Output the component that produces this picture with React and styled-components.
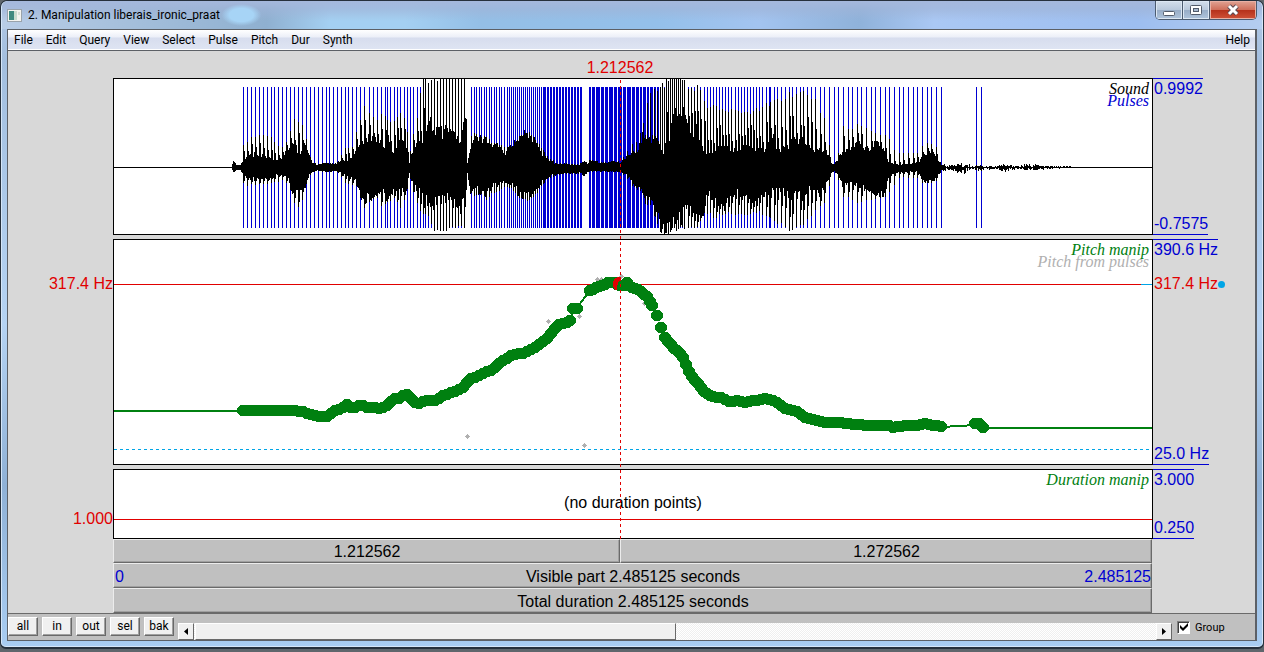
import React from "react";
import styled, { createGlobalStyle } from "styled-components";

const Global = createGlobalStyle`
  * { box-sizing: border-box; }
  html, body { margin: 0; background: #5f666c; }
  button, input { font: inherit; margin: 0; }
`;

const blue = "#0000d2";
const red = "#e10000";
const green = "#008010";
const cyan = "#00a5e6";
const grey = "#b0b0b0";

const Win = styled.main`
  display: flex;
  flex-direction: column;
  border: solid #26303c;
  border-width: 1px 1px 2px;
  border-radius: 7px 7px 6px 6px;
  padding: 0 6px 6px;
  background: linear-gradient(180deg, #b4c9e6 0, #a3bfdf 60px, #b5d3f3 50%, #8fb1d6 75%, #a9cdf2 100%);
  box-shadow: inset 0 0 0 1px #d5e6f8;
  font-family: Roboto, "Open Sans", sans-serif;
  font-size: 12px;
  color: #000;
`;

const TitleBar = styled.header`
  display: flex;
  align-items: flex-start;
  height: 28px;
  margin: 0 -5px;
  padding: 0 5px;
  border-radius: 6px 6px 0 0;
  background:
    radial-gradient(ellipse 20px 11px at 19% 50%, #a7d4f6 60%, transparent 100%),
    linear-gradient(180deg, #a5b8dc 0, #9fb4d8b0 8px, transparent 20px),
    linear-gradient(90deg, #b9cde6 0, #8fb0d0 21%, #a4d0f2 26%, #a4d0f2 32%, #94bfe6 38%, #94c0ea 52%, #a3c4f0 60%, #8fb2da 68%, #aac8f4 74%, #9dbef0 90%, #b4cdf0 100%);
`;

const AppIcon = styled.svg`
  width: 16px;
  height: 16px;
  margin: 6px 5px 0 0;
`;

const Title = styled.h1`
  flex: 1;
  margin: 0;
  font-size: 12px;
  font-weight: 400;
  line-height: 28px;
`;

const Controls = styled.div`
  display: flex;
  height: 19px;
  border: solid #4b5b70;
  border-width: 0 1px 1px;
  border-radius: 0 0 5px 5px;
  overflow: hidden;
`;

const ControlButton = styled.button`
  width: ${(p) => (p.$close ? 46 : 27)}px;
  padding: 0;
  border: 0;
  border-right: ${(p) => (p.$close ? 0 : 1)}px solid #4b5b70;
  display: flex;
  align-items: center;
  justify-content: center;
  box-shadow: inset 0 0 0 1px ${(p) => (p.$close ? "#e8b0a4" : "#dce7f3")};
  background: ${(p) =>
    p.$close
      ? "linear-gradient(180deg, #e0a394 0, #cf6f5b 48%, #b5301a 50%, #cf5238 100%)"
      : "linear-gradient(180deg, #d3deeb 0, #b9c9dc 48%, #97acc6 50%, #afc4dc 100%)"};
`;

const Client = styled.div`
  border: solid #5c6066;
  border-width: 1px 2px 1px 1px;
  background: #d8d8d8;
`;

const MenuBar = styled.nav`
  display: flex;
  height: 21px;
  border-bottom: 1px solid #5c6066;
  box-shadow: inset 0 -1px 0 #fff;
  background: linear-gradient(180deg, #fff 0, #eceff8 7px, #d7ddee 8px, #dfe5f3 100%);
`;

const MenuItem = styled.button`
  height: 20px;
  padding: 0 7px 0 6px;
  border: 0;
  background: none;
  font-size: 12px;
  line-height: 20px;
  &:last-child { margin-left: auto; padding-right: 5px; }
`;

const Canvas = styled.section`
  display: grid;
  grid-template-columns: 105px 1fr 102px;
  font-family: "Liberation Sans", Arial, sans-serif;
  font-size: 16px;
  line-height: 16px;
`;

const TimeRow = styled.div`
  grid-column: 2;
  height: 27px;
  padding: 9px 26px 0 0;
  text-align: center;
  color: ${red};
`;

const LeftLabels = styled.div`
  grid-column: 1;
  display: flex;
  flex-direction: column;
  gap: 219px;
  padding-top: 198px;
  text-align: right;
  color: ${red};
`;

const Plots = styled.div`
  position: relative;
  display: flex;
  flex-direction: column;
  gap: 4px;
`;

const Cursor = styled.div`
  position: absolute;
  top: 2px;
  bottom: 0;
  left: 48.75%;
  width: 1px;
  background: repeating-linear-gradient(180deg, ${red} 0 3px, transparent 3px 6px);
`;

const Panel = styled.div`
  position: relative;
  height: ${(p) => p.$h}px;
  background: #fff;
  border: 1px solid #000;
`;

const Drawing = styled.svg`
  display: block;
  width: 100%;
  height: 100%;
`;

const Legend = styled.div`
  position: absolute;
  top: 4px;
  right: 3px;
  text-align: right;
  font: italic 16px/12px "Liberation Serif", "Times New Roman", serif;
`;

const LegendLine = styled.div`
  color: ${(p) => p.$color};
`;

const Note = styled.p`
  position: absolute;
  inset: 25px 0 auto;
  margin: 0;
  text-align: center;
`;

const Scales = styled.div`
  display: flex;
  flex-direction: column;
  gap: 4px;
`;

const Scale = styled.div`
  display: flex;
  flex-direction: column;
  align-items: flex-start;
  height: ${(p) => p.$h}px;
  color: ${blue};
`;

const Limit = styled.span`
  padding: ${(p) => (p.$low ? "0 0 2px 1px" : "2px 0 0 1px")};
  border: 0 solid ${blue};
  border-width: ${(p) => (p.$low ? "0 0 1px" : "1px 0 0")};
  margin-top: ${(p) => (p.$low ? "auto" : 0)};
`;

const Current = styled.span`
  display: flex;
  align-items: center;
  padding-left: 1px;
  margin-top: 18px;
  color: ${red};
`;

const Dot = styled.i`
  width: 7px;
  height: 7px;
  border-radius: 50%;
  background: ${cyan};
`;

const Bars = styled.div`
  grid-column: 2;
  padding-right: 1px;
`;

const BarRow = styled.div`
  display: flex;
  height: ${(p) => p.$h}px;
`;

const Bar = styled.button`
  flex: ${(p) => p.$grow || 1} 1 0;
  display: flex;
  justify-content: space-between;
  align-items: center;
  padding: 2px 0 0 1px;
  border: 1px solid;
  border-color: #ececec #6a6a6a #6a6a6a #ececec;
  background: #c0c0c0;
  box-shadow: inset -1px -1px 0 #a0a0a0;
  font-size: 16px;
  color: #000;
`;

const Edge = styled.span`
  flex: 1;
  text-align: ${(p) => p.$align};
  color: ${blue};
`;

const Part = styled.span`
  flex: 1;
  text-align: center;
`;

const Footer = styled.footer`
  display: flex;
  align-items: flex-start;
  height: 27px;
  border-top: 1px solid #6a6a6a;
  background: #c0c0c0;
  font-size: 11px;
`;

const Tools = styled.div`
  display: flex;
  gap: 4px;
  padding: 3px 4px 0 0;
`;

const Tool = styled.button`
  width: 30px;
  height: 19px;
  padding: 0;
  border: 1px solid;
  border-color: #fff #696969 #696969 #fff;
  box-shadow: inset -1px -1px 0 #a0a0a0;
  background: #f0f0f0;
  font-size: 12px;
  line-height: 15px;
`;

const ScrollBar = styled.div`
  display: flex;
  flex: 1;
  height: 17px;
  margin-top: 9px;
  background: repeating-conic-gradient(#fff 0 25%, #efefef 0 50%) 0 0 / 2px 2px;
`;

const Arrow = styled.button`
  width: 16px;
  padding: 0;
  display: flex;
  align-items: center;
  justify-content: center;
  border: 1px solid;
  border-color: #fff #696969 #696969 #fff;
  background: #f0f0f0;
`;

const Track = styled.div`
  flex: 1;
  padding-left: 1px;
`;

const Thumb = styled.div`
  width: 50%;
  height: 100%;
  border: 1px solid;
  border-color: #fff #696969 #696969 #fff;
  background: #f0f0f0;
`;

const Group = styled.label`
  position: relative;
  display: flex;
  align-items: center;
  gap: 5px;
  width: 83px;
  height: 26px;
  padding-left: 5px;
`;

const Check = styled.input`
  appearance: none;
  width: 13px;
  height: 13px;
  background: #fff;
  border: 1px solid;
  border-color: #808080 #fff #fff #808080;
  box-shadow: inset 1px 1px 0 #404040;
`;

const Tick = styled.svg`
  position: absolute;
  left: 8px;
  top: 9px;
  width: 8px;
  height: 8px;
  pointer-events: none;
`;

/* Glottal pulses: [x, width] in drawing units. */
const range = (from, to, step, width = 1) => {
  const out = [];
  for (let x = from; x < to; x += step) out.push([Math.round(x), width]);
  return out;
};

const pulses = [
  ...range(243, 346, 3.93),
  ...range(348, 386, 4.1),
  ...range(387, 424, 3.3),
  ...range(425, 467, 3),
  ...range(471, 506, 2.5),
  ...range(507, 544, 2),
  ...range(544, 582, 3, 2),
  [589, 2], [592, 3], [596, 4], [601, 3], [605, 3], [609, 4], [614, 3], [618, 4],
  [623, 3], [627, 4], [632, 3], [636, 3], [640, 2], [643, 3], [647, 2], [650, 3],
  [654, 2], [657, 2],
  ...range(660, 686, 2),
  ...range(688, 770, 3.1),
  ...range(770, 812, 3.7),
  ...range(815, 943, 4.65),
  [976, 1], [981, 1],
];

/* Envelope: x, body above, body below, spike above, spike below. */
const envelope = [
  [231, 0, 0, 0, 0], [233, 6, 4, 6, 4], [236, 2, 2, 2, 2], [240, 2, 2, 3, 3], [242, 5, 5, 22, 14],
  [247, 10, 10, 25, 18], [251, 12, 10, 30, 17], [262, 12, 12, 32, 17], [270, 9, 10, 32, 16],
  [277, 6, 6, 22, 14], [284, 12, 7, 20, 12], [289, 19, 12, 34, 20], [293, 20, 24, 48, 36],
  [300, 14, 22, 46, 40], [304, 22, 20, 42, 24], [308, 12, 8, 15, 10], [312, 4, 4, 4, 4],
  [318, 2, 2, 3, 3], [325, 4, 4, 4, 4], [336, 3, 3, 3, 3], [340, 5, 4, 11, 8], [345, 6, 8, 19, 15],
  [352, 9, 9, 20, 18], [357, 20, 15, 38, 20], [361, 24, 27, 54, 36], [365, 28, 30, 64, 43],
  [372, 26, 27, 50, 30], [378, 24, 26, 50, 32], [382, 20, 22, 57, 40], [388, 23, 26, 48, 35],
  [394, 13, 20, 46, 30], [400, 26, 22, 55, 40], [406, 22, 20, 48, 30], [409, 4, 5, 10, 6],
  [412, 12, 15, 30, 22], [418, 24, 20, 55, 40], [421, 22, 28, 88, 44], [430, 42, 35, 88, 54],
  [434, 38, 35, 92, 62], [442, 33, 28, 92, 63], [450, 34, 30, 92, 63], [460, 26, 38, 92, 60],
  [465, 50, 32, 92, 60], [466, 40, 20, 60, 40], [467, 5, 5, 6, 5], [470, 16, 22, 30, 26], [474, 25, 20, 35, 28],
  [480, 28, 23, 29, 26], [486, 26, 27, 32, 32], [491, 18, 18, 24, 26], [496, 23, 18, 24, 25],
  [505, 13, 13, 20, 18], [512, 20, 17, 21, 22], [520, 30, 25, 33, 32], [528, 34, 28, 37, 34],
  [536, 24, 20, 27, 27], [541, 14, 14, 20, 18], [548, 7, 9, 9, 11], [553, 4, 7, 7, 9],
  [558, 3, 6, 3, 7], [566, 3, 5, 3, 5], [579, 2, 5, 3, 5], [584, 6, 7, 7, 7], [587, 3, 4, 4, 4],
  [590, 6, 3, 8, 4], [600, 4, 3, 5, 4], [612, 5, 3, 6, 4], [620, 5, 4, 6, 4], [626, 9, 7, 14, 10],
  [632, 12, 14, 25, 18], [638, 18, 21, 28, 22], [642, 30, 22, 40, 24], [646, 28, 31, 60, 36],
  [650, 27, 35, 75, 38], [656, 28, 45, 78, 54], [660, 16, 57, 84, 64], [664, 14, 58, 84, 66],
  [667, 46, 58, 88, 67], [670, 20, 54, 88, 66], [672, 51, 48, 91, 62], [684, 50, 46, 91, 62],
  [687, 45, 32, 82, 60], [691, 28, 45, 78, 60], [697, 36, 42, 82, 60], [702, 18, 44, 72, 48],
  [707, 13, 16, 62, 48], [716, 16, 34, 62, 50], [724, 22, 36, 58, 48], [730, 16, 26, 58, 46],
  [740, 15, 24, 55, 48], [746, 21, 22, 58, 46], [752, 19, 36, 56, 47], [763, 15, 28, 62, 46],
  [773, 30, 18, 68, 56], [777, 15, 22, 70, 58], [784, 20, 24, 72, 60], [790, 22, 30, 74, 64],
  [797, 26, 22, 76, 60], [803, 24, 32, 78, 58], [809, 18, 20, 74, 52], [816, 16, 20, 66, 44],
  [821, 18, 26, 56, 40], [827, 14, 12, 42, 30], [831, 4, 5, 5, 5], [834, 2, 2, 3, 3],
  [839, 10, 9, 17, 15], [843, 17, 18, 42, 30], [848, 14, 14, 38, 30], [857, 26, 17, 44, 36],
  [865, 16, 20, 40, 34], [878, 24, 24, 34, 32], [884, 18, 24, 33, 32], [888, 5, 10, 30, 26],
  [894, 3, 5, 18, 18], [900, 2, 4, 14, 9], [910, 3, 4, 14, 11], [918, 4, 4, 14, 10],
  [924, 13, 14, 24, 17], [934, 14, 12, 24, 14], [938, 5, 6, 16, 12], [944, 3, 3, 7, 4],
  [952, 2, 3, 3, 3], [958, 5, 6, 5, 7], [963, 3, 5, 3, 5], [967, 5, 6, 7, 8], [971, 1, 1, 2, 2],
  [977, 3, 3, 6, 5], [985, 1, 2, 2, 3], [995, 1, 1, 1, 1], [1003, 3, 4, 4, 4], [1012, 2, 2, 2, 2],
  [1018, 1, 1, 1, 1], [1024, 3, 2, 3, 2], [1036, 3, 2, 3, 2], [1042, 1, 2, 1, 2],
  [1050, 1, 1, 1, 1], [1070, 1, 0, 1, 0], [1072, 0, 0, 0, 0],
];

const sample = (table, x) => {
  let i = 0;
  while (i < table.length - 2 && table[i + 1][0] <= x) i += 1;
  const a = table[i];
  const b = table[i + 1];
  const t = Math.min(1, Math.max(0, (x - a[0]) / (b[0] - a[0])));
  return a.slice(1).map((v, k) => v + (b[k + 1] - v) * t);
};

const noise = (n) => {
  const s = Math.sin(n * 12.9898) * 43758.5453;
  return s - Math.floor(s);
};

const spikeColumns = new Set(pulses.map(([x]) => x));

const wavePath = () => {
  let d = "";
  for (let x = 231; x < 1072; x += 1) {
    const [bu, bd, su, sd] = sample(envelope, x);
    const spike = spikeColumns.has(x);
    /* The swing after a pulse rings on for one column where pulses are sparse. */
    const sparse = x < 425 || x > 687;
    const ring = !spike && sparse && spikeColumns.has(x - 1);
    const mix = ring ? 0.2 + 0.4 * noise(x + 3) : 0;
    const ku = 0.85 + 0.4 * noise(x);
    const kd = 0.85 + 0.4 * noise(x + 999);
    const up = spike ? su * (0.93 + 0.09 * noise(x + 5)) : bu * ku * (1 - mix) + su * mix;
    const down = spike ? sd * (0.93 + 0.09 * noise(x + 7)) : bd * kd * (1 - mix) + sd * mix;
    const quiet = x > 940;
    const top = Math.max(79, Math.round(167 - up * (quiet ? noise(x + 31) : 1)));
    const bottom = Math.min(234, Math.round(168 + down * (quiet ? noise(x + 77) : 1)));
    d += `M${x} ${top}h1V${bottom}h-1z`;
  }
  return d;
};

const pitch = [
  [243, 410], [293, 410], [302, 411], [309, 414], [318, 416], [327, 416], [331, 413], [336, 409],
  [342, 408], [347, 404], [352, 408], [361, 404], [368, 408], [373, 406], [378, 408], [384, 407],
  [389, 403], [393, 398], [398, 399], [402, 395], [406, 393], [410, 397], [415, 402], [419, 403],
  [425, 400], [435, 400], [443, 395], [457, 390], [466, 385], [468, 379], [477, 377], [482, 373],
  [493, 369], [500, 362], [508, 357], [512, 354], [524, 353], [533, 348], [540, 343], [546, 339],
  [553, 330], [560, 323], [566, 322], [570, 320],
];
const pitchMid = [[573, 308], [577, 308]];
const pitchFall = [
  [590, 290], [597, 287], [602, 285], [608, 282], [613, 282], [618, 284], [622, 286], [627, 282],
  [631, 287], [637, 288], [643, 293], [648, 297], [652, 305], [657, 315], [661, 327], [665, 337],
  [670, 343], [674, 348], [679, 351], [684, 359], [687, 366], [691, 375], [698, 383], [706, 393],
  [713, 396], [720, 397], [730, 401], [737, 400], [745, 402], [760, 399], [766, 398], [775, 400],
  [785, 408], [797, 411], [807, 418], [815, 419], [823, 422], [838, 422], [855, 424], [870, 425],
  [888, 425], [893, 427], [905, 425], [917, 425], [925, 423], [934, 425], [941, 426],
];
const pitchEnd = [[975, 423], [979, 423], [983, 427]];

const densify = (table, steps) =>
  steps
    .filter((x) => x >= table[0][0] && x <= table[table.length - 1][0])
    .map((x) => [x, Math.round(sample(table, x)[0])]);

const steps = [
  ...range(243, 571, 4).map((p) => p[0]),
  ...range(590, 651, 3).map((p) => p[0]),
  652, 657, 661,
  ...range(665, 712, 3).map((p) => p[0]),
  ...range(713, 943, 4).map((p) => p[0]),
];
const dots = [
  ...densify(pitch, steps), [570, 320], ...pitchMid,
  ...densify(pitchFall, steps), [627, 282], [941, 426], ...pitchEnd,
];
const strays = [
  [467, 436], [584, 445], [548, 321], [579, 316], [597, 279], [601, 279], [621, 276], [644, 303],
];

const SoundDrawing = () => (
  <Drawing viewBox="114 79 1038 155" preserveAspectRatio="none" shapeRendering="crispEdges">
    <path d="M114 167.5H1152" stroke="#000" />
    {pulses.map(([x, w]) => (
      <rect key={x} x={x} y="87" width={w} height="141" fill={blue} />
    ))}
    <path d={wavePath()} fill="#000" />
  </Drawing>
);

const PitchDrawing = () => (
  <Drawing viewBox="114 240 1038 224" preserveAspectRatio="none" shapeRendering="crispEdges">
    <path d="M114 449.5H1152" stroke={cyan} strokeDasharray="3 3" />
    <path d="M114 284.5H1141" stroke={red} />
    <path d="M1141 284.5H1152" stroke={cyan} />
    {strays.map(([x, y]) => (
      <path key={x} fill={grey} d={`M${x - 2} ${y}h1v-1h1v-1h1v1h1v1h1v1h-1v1h-1v1h-1v-1h-1v-1h-1z`} />
    ))}
    <path
      fill="none"
      stroke={green}
      strokeWidth="2"
      d={`M114 411H243M570 320L574 308H577L590 290M942 427L976 425M984 428H1152`}
    />
    {dots.map(([x, y], i) => (
      <circle key={i} cx={x} cy={y + 0.5} r="6" fill={green} />
    ))}
    <path fill={red} d="M613 283q1-5 5-6h3v4h-2l-2 5v4h-2q-2-3-2-7z" />
  </Drawing>
);

const menus = ["File", "Edit", "Query", "View", "Select", "Pulse", "Pitch", "Dur", "Synth", "Help"];
const tools = ["all", "in", "out", "sel", "bak"];

export default function App() {
  return (
    <>
      <Global />
      <Win>
        <TitleBar>
          <AppIcon viewBox="0 0 16 16" aria-hidden="true">
            <rect x="0.5" y="2.5" width="14" height="12" fill="#f4f4f0" stroke="#9aa3ab" />
            <rect x="2" y="4" width="5" height="9" fill="#3f8a80" />
            <rect x="7" y="4" width="3" height="9" fill="#c9dccf" />
            <rect x="11" y="5" width="2" height="3" fill="#d8e0d8" />
          </AppIcon>
          <Title>2. Manipulation liberais_ironic_praat</Title>
          <Controls>
            <ControlButton aria-label="Minimize">
              <svg width="13" height="14" viewBox="0 0 13 14">
                <rect x="0.5" y="8.5" width="11" height="4" rx="1" fill="#fff" stroke="#535c6b" />
              </svg>
            </ControlButton>
            <ControlButton aria-label="Maximize">
              <svg width="12" height="12" viewBox="0 0 12 12">
                <rect x="0.5" y="1.5" width="11" height="9" rx="1" fill="#fff" stroke="#535c6b" />
                <rect x="3.5" y="4.5" width="5" height="3" fill="#a7b9cf" stroke="#535c6b" />
              </svg>
            </ControlButton>
            <ControlButton $close aria-label="Close">
              <svg width="14" height="12" viewBox="0 0 14 12">
                <path d="M3 2L11 10M11 2L3 10" stroke="#5c4a52" strokeWidth="5" />
                <path d="M3 2L11 10M11 2L3 10" stroke="#fff" strokeWidth="3" />
              </svg>
            </ControlButton>
          </Controls>
        </TitleBar>
        <Client>
          <MenuBar>
            {menus.map((m) => (
              <MenuItem key={m}>{m}</MenuItem>
            ))}
          </MenuBar>
          <Canvas>
            <TimeRow>1.212562</TimeRow>
            <LeftLabels>
              <span>317.4 Hz</span>
              <span>1.000</span>
            </LeftLabels>
            <Plots>
              <Panel $h={157}>
                <SoundDrawing />
                <Legend>
                  <LegendLine $color="#000">Sound</LegendLine>
                  <LegendLine $color={blue}>Pulses</LegendLine>
                </Legend>
              </Panel>
              <Panel $h={226}>
                <PitchDrawing />
                <Legend>
                  <LegendLine $color={green}>Pitch manip</LegendLine>
                  <LegendLine $color={grey}>Pitch from pulses</LegendLine>
                </Legend>
              </Panel>
              <Panel $h={70}>
                <Drawing viewBox="0 0 1038 68" preserveAspectRatio="none" shapeRendering="crispEdges">
                  <path d="M0 49.5H1038" stroke={red} />
                </Drawing>
                <Legend>
                  <LegendLine $color={green}>Duration manip</LegendLine>
                </Legend>
                <Note>(no duration points)</Note>
              </Panel>
              <Cursor />
            </Plots>
            <Scales>
              <Scale $h={157}>
                <Limit>0.9992</Limit>
                <Limit $low>-0.7575</Limit>
              </Scale>
              <Scale $h={226}>
                <Limit>390.6 Hz</Limit>
                <Current>317.4 Hz<Dot /></Current>
                <Limit $low>25.0 Hz</Limit>
              </Scale>
              <Scale $h={70}>
                <Limit>3.000</Limit>
                <Limit $low>0.250</Limit>
              </Scale>
            </Scales>
            <Bars>
              <BarRow $h={24}>
                <Bar $grow={507}><Part>1.212562</Part></Bar>
                <Bar $grow={532}><Part>1.272562</Part></Bar>
              </BarRow>
              <BarRow $h={25}>
                <Bar>
                  <Edge $align="left">0</Edge>
                  <span>Visible part 2.485125 seconds</span>
                  <Edge $align="right">2.485125</Edge>
                </Bar>
              </BarRow>
              <BarRow $h={25}>
                <Bar>
                  <Part>Total duration 2.485125 seconds</Part>
                </Bar>
              </BarRow>
            </Bars>
          </Canvas>
          <Footer>
            <Tools>
              {tools.map((t) => (
                <Tool key={t}>{t}</Tool>
              ))}
            </Tools>
            <ScrollBar>
              <Arrow aria-label="Scroll left">
                <svg width="4" height="7" viewBox="0 0 4 7"><path d="M4 0V7L0 3.5z" /></svg>
              </Arrow>
              <Track><Thumb /></Track>
              <Arrow aria-label="Scroll right">
                <svg width="4" height="7" viewBox="0 0 4 7"><path d="M0 0V7L4 3.5z" /></svg>
              </Arrow>
            </ScrollBar>
            <Group>
              <Check type="checkbox" defaultChecked />
              <Tick viewBox="0 0 8 8"><path d="M0 2L3 5L8 0V3L3 8L0 5z" /></Tick>
              Group
            </Group>
          </Footer>
        </Client>
      </Win>
    </>
  );
}
